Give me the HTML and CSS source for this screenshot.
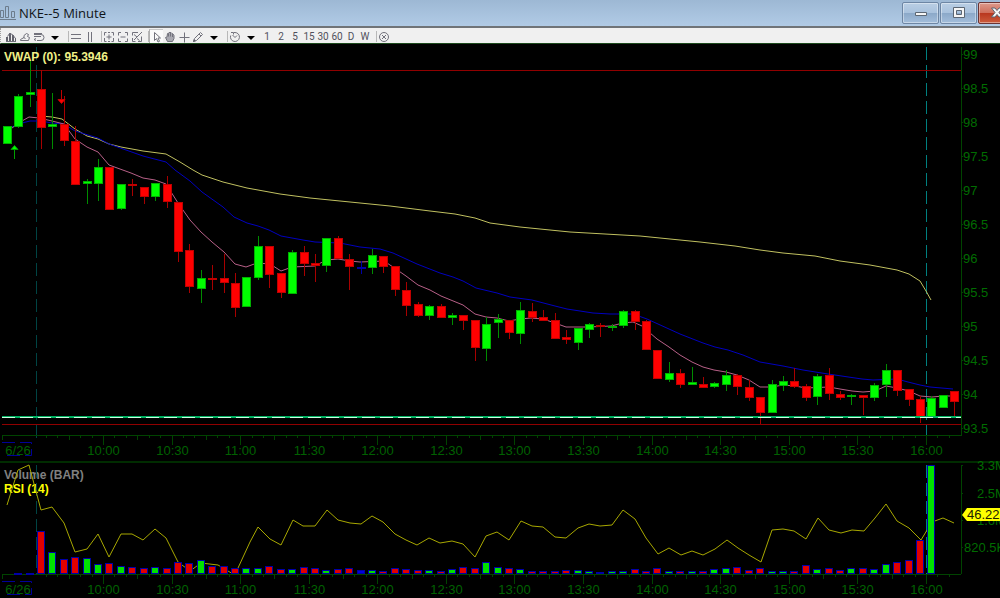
FILE: index.html
```html
<!DOCTYPE html>
<html lang="en">
<head>
  <meta charset="UTF-8">
  <meta name="viewport" content="width=device-width, initial-scale=1.0">
  <title>NKE--5 Minute</title>
  <link rel="stylesheet" href="styles.css">
</head>
<body>
  <header class="titlebar">
    <svg class="app-icon" viewBox="0 0 16 16" aria-hidden="true">
      <path d="M0.5 12.5V5.5h3v7zM5.5 12.5V1.5h3v11zM11.5 12.5V6.5h3v6zM0 14.5h16"/>
    </svg>
    <h1>NKE--5 Minute</h1>
    <div class="window-buttons">
      <button type="button" aria-label="Minimize">
        <svg viewBox="0 0 14 14"><path class="glyph" d="M1.5 6.5h11v3h-11z"/></svg>
      </button>
      <button type="button" aria-label="Maximize">
        <svg viewBox="0 0 14 14"><path class="glyph" fill-rule="evenodd" d="M1.5 1.5h11v10h-11zM4.5 4.5v4h5v-4z"/></svg>
      </button>
      <button type="button" class="close" aria-label="Close">
        <svg viewBox="0 0 14 14"><path class="glyph" d="M1.5 2h3.5l2 2.500 2-2.500h3.500l-3.500 4.500 3.500 4.500h-3.500l-2-2.500-2 2.500h-3.500l3.500-4.500z"/></svg>
      </button>
    </div>
  </header>

  <nav class="toolbar" aria-label="Chart tools">
    <button type="button" aria-label="Chart style"><svg viewBox="0 0 12 12"><path class="solid" d="M1 6h2v4H1zM4 2h2v8H4zM7 4h2v6H7zM10 7h1v3h-1z"/><path d="M1 10.500h10M2.500 5.500l2-3 3 1 3 4"/></svg></button>
    <button type="button" aria-label="Studies"><svg viewBox="0 0 12 12"><path d="M1.500 9.500h8l1-3-2-1 1-2-2-1-2.500 2v2l-3.500 2zM4.500 6.500l2 1"/></svg></button>
    <button type="button" aria-label="Templates"><svg viewBox="0 0 12 12"><path d="M1 2.500h8M1 5.500h7M4 9.500h4M1 3.500h7q3 0 3 3t-3 3M3 7.500l-2 1 2 1"/></svg></button>
    <button type="button" class="drop" aria-label="More templates"><svg viewBox="0 0 12 12"><path class="arrow" d="M2 5h8l-4 4z"/></svg></button>
    <span class="sep"></span>
    <button type="button" aria-label="Horizontal line"><svg viewBox="0 0 12 12"><path d="M1 3.500h10M1 7.500h10"/></svg></button>
    <button type="button" aria-label="Vertical line"><svg viewBox="0 0 12 12"><path d="M4.500 1v10M7.500 1v10"/></svg></button>
    <span class="sep"></span>
    <button type="button" aria-label="Zoom in"><svg viewBox="0 0 12 12"><path d="M3.500 1.500h-2v3M1.500 7v3.500h2M8.500 1.500h2v3M10.500 7v3.500h-2M5 1.500h2M5 10.500h2M3.500 6h5M6 3.500v5"/></svg></button>
    <button type="button" aria-label="Zoom out"><svg viewBox="0 0 12 12"><path d="M4 1.500h-2.500v3M8 1.500h2.500v3M4 10.500h-2.500v-3M8 10.500h2.500v-3M3.500 6h5"/></svg></button>
    <button type="button" aria-label="Reset zoom"><svg viewBox="0 0 12 12"><path d="M7 1.500h-5.500v3M1.500 7v3.500h3M7 10.500h3.500v-5M11 1l-8 8M3 3.500l3 2.500M6 7.500l2.500 2"/></svg></button>
    <span class="sep"></span>
    <button type="button" class="active" aria-label="Pointer"><svg viewBox="0 0 12 12"><path d="M3.500 1.500v8l2-2 1.500 3.500 1.500-.7-1.500-3.300h2.500z"/></svg></button>
    <button type="button" aria-label="Pan"><svg viewBox="0 0 12 12"><path class="palm" d="M3.500 10.500l-2-4 1.500-.5.500-3.500 1 0 .5-1h2l1 1 1 .5 1 1.500v3l-1.500 3z"/><path d="M4.500 2.500v3M6.500 2v3.500M8.500 3v3"/></svg></button>
    <button type="button" aria-label="Crosshair"><svg viewBox="0 0 12 12"><path d="M1.500 6.500h10M6.500 1.500v10"/></svg></button>
    <button type="button" aria-label="Draw"><svg viewBox="0 0 12 12"><path d="M1.500 10.500l1-3 6-6 2 2-6 6zM7 3l2 2"/><path class="solid" d="M1 11l1-3 2 2z"/></svg></button>
    <button type="button" class="drop" aria-label="More drawing tools"><svg viewBox="0 0 12 12"><path class="arrow" d="M2 5h8l-4 4z"/></svg></button>
    <span class="sep"></span>
    <button type="button" aria-label="Interval"><svg viewBox="0 0 12 12"><path d="M5 1.500h1a4.500 4.500 0 1 1-4.300 3M2 1.500h2.500v2M6 6.500l-2.500-2.500M6 6.500l2-2"/></svg></button>
    <button type="button" class="drop" aria-label="More intervals"><svg viewBox="0 0 12 12"><path class="arrow" d="M2 5h8l-4 4z"/></svg></button>
    <button type="button">1</button>
    <button type="button">2</button>
    <button type="button">5</button>
    <button type="button">15</button>
    <button type="button">30</button>
    <button type="button">60</button>
    <button type="button">D</button>
    <button type="button">W</button>
    <span class="sep"></span>
    <button type="button" aria-label="Close chart"><svg viewBox="0 0 12 12"><circle cx="6" cy="6" r="4.500"/><path d="M4 4l4 4M8 4l-4 4"/></svg></button>
  </nav>

  <main class="charts">
    <svg id="price" class="chart" viewBox="0 44 1000 417" role="img" aria-label="NKE price"></svg>
    <svg id="volume" class="chart" viewBox="0 463 1000 135" role="img" aria-label="NKE volume and RSI"></svg>
  </main>

  <script src="chart.js"></script>
</body>
</html>
```

FILE: styles.css
```css
* {
  margin: 0;
  padding: 0;
  box-sizing: border-box;
}

body {
  font-family: "Open Sans", "Noto Sans", sans-serif;
  background: #000;
  min-height: 100vh;
  overflow: hidden;
}

/* title bar */
.titlebar {
  display: flex;
  align-items: center;
  height: 28px;
  background: linear-gradient(#9db8d4, #b1cbe6);
  border-bottom: 2px solid #707478;
  overflow: hidden;
}

.app-icon {
  width: 16px;
  height: 16px;
  flex: none;
  fill: none;
  stroke: #6d7c8c;
}

.titlebar h1 {
  flex: 1;
  padding-left: 3px;
  font-size: 13px;
  line-height: 18px;
  font-weight: 400;
  color: #101418;
}

.window-buttons {
  display: flex;
  gap: 1px;
  margin-right: -16px;
}

.window-buttons button {
  display: flex;
  align-items: center;
  justify-content: center;
  width: 37px;
  height: 22px;
  border: 1px solid #6d86a4;
  border-radius: 2px;
  background: linear-gradient(#b9cee4 0%, #a9c2dd 48%, #8ba8c8 50%, #a3bedb 100%);
  box-shadow: inset 0 0 0 1px rgba(255, 255, 255, 0.4);
}

.window-buttons .close {
  width: 38px;
  border-color: #6a3434;
  background: linear-gradient(#dd9a8c 0%, #cf6f5c 48%, #b8361e 50%, #cc5c3c 100%);
}

.window-buttons svg {
  width: 14px;
  height: 14px;
}

.glyph {
  fill: #f6f6f6;
  stroke: #5c6672;
}

/* toolbar */
.toolbar {
  display: flex;
  align-items: center;
  height: 16px;
  padding: 1px 0 0 3px;
  background: #f0f0f0;
  border-left: 1px dotted #a0a0a0;
  border-bottom: 1px solid #1c4a1c;
}

.toolbar button {
  display: flex;
  align-items: center;
  justify-content: center;
  width: 14px;
  height: 14px;
  padding-top: 1px;
  border: none;
  background: none;
  font-family: "Liberation Sans Narrow", "Roboto", sans-serif;
  font-size: 10px;
  line-height: 12px;
  color: #50505c;
}

.toolbar .drop {
  width: 18px;
}

.toolbar .active {
  padding: 0;
  background: #fafafa;
  border-left: 1px solid #b0b0b0;
  border-top: 1px solid #c8c8c8;
}

.toolbar svg {
  width: 12px;
  height: 12px;
  flex: none;
  fill: none;
  stroke: #72727c;
}

.toolbar .solid {
  fill: #62626c;
  stroke: none;
}

.toolbar .palm {
  fill: #a8a8b0;
}

.toolbar .arrow {
  fill: #000;
  stroke: none;
}

.sep {
  width: 5px;
  height: 11px;
  border-right: 1px solid #b8b8b8;
}

/* charts */
.chart {
  display: block;
  width: 100%;
  height: auto;
  font-family: "Liberation Sans", Arial, sans-serif;
  font-size: 13px;
  fill: none;
  overflow: visible;
}

.chart + .chart {
  border-top: 2px solid #002c00;
}

.chart line,
.chart rect,
.axis {
  shape-rendering: crispEdges;
}

.axis {
  stroke: #004400;
}

.axis-label {
  fill: #006c00;
}

.time-label {
  fill: #006000;
  text-anchor: middle;
}

.title {
  font-size: 12px;
  font-weight: 700;
}

.title.vwap-title { fill: #f0f088; }
.title.volume-title { fill: #808080; }
.title.rsi-title { fill: #ffff00; }

.date-box {
  stroke: #000098;
  stroke-dasharray: 13 5;
}

.session-start { stroke: #004444; stroke-dasharray: 13 5; }
.session-end { stroke: #008080; stroke-dasharray: 13 5; }

.range { stroke: #900000; }
.last-price { stroke: #00b060; stroke-width: 2; }
.last-price-dash { stroke: #c8ffe0; stroke-dasharray: 13 5; }

.vwap { stroke: #c0c060; }
.ema-slow { stroke: #0000c0; }
.ema-fast { stroke: #b86088; }
.rsi { stroke: #a8a800; }

.up .body { fill: #00ff00; stroke: #00b000; }
.up .wick { stroke: #008c00; }
.down .body { fill: #ff0000; stroke: #c00000; }
.down .wick { stroke: #a80000; }
.flat .body,
.flat .wick { stroke: #0000a8; }

.bar { stroke: #0000a8; }
.bar.up { fill: #00e000; }
.bar.down { fill: #e00000; }
.bar.flat { fill: #0000e0; }

.signal-up { fill: #00ff00; stroke: #00a000; }
.signal-down { fill: #ff0000; stroke: #c00000; }

.tag { fill: #ffff00; }
.tag-text { fill: #202000; }
```

FILE: chart.js
```js
const SVG_NS = "http://www.w3.org/2000/svg";
const FIRST_X = 7;
const STEP = 11.416;
const AXIS_X = 961;

// direction, high, body top, body bottom, low
const candles = [
  ["up", 126, 126, 144, 144], ["up", 94, 96, 127, 128], ["up", 61, 92, 95, 107],
  ["down", 70, 89, 128, 149], ["up", 93, 124, 127, 149], ["down", 96, 124, 141, 146],
  ["down", 126, 141, 185, 185], ["up", 179, 181, 184, 204], ["up", 159, 167, 184, 201],
  ["down", 167, 167, 210, 210], ["up", 184, 184, 209, 210], ["down", 179, 184, 185, 196],
  ["down", 187, 187, 197, 204], ["up", 183, 183, 197, 201], ["down", 176, 184, 202, 208],
  ["down", 202, 202, 252, 262], ["down", 244, 250, 287, 293], ["up", 270, 278, 289, 303],
  ["down", 265, 278, 280, 290], ["down", 254, 278, 283, 293], ["down", 273, 283, 308, 317],
  ["up", 277, 277, 307, 307], ["up", 236, 246, 278, 280], ["down", 246, 246, 275, 288],
  ["down", 273, 273, 293, 298], ["up", 250, 252, 294, 294], ["down", 246, 252, 264, 276],
  ["down", 254, 263, 266, 282], ["up", 238, 238, 266, 272], ["down", 236, 238, 259, 259],
  ["down", 254, 259, 267, 290], ["flat", 261, 267, 268, 274], ["up", 249, 255, 268, 274],
  ["down", 256, 256, 267, 273], ["down", 266, 266, 290, 296], ["down", 282, 290, 306, 316],
  ["down", 302, 304, 316, 317], ["up", 305, 306, 316, 320], ["down", 304, 306, 318, 318],
  ["up", 313, 315, 318, 325], ["down", 315, 315, 321, 330], ["down", 320, 320, 348, 361],
  ["up", 317, 324, 349, 361], ["up", 314, 319, 323, 338], ["down", 320, 320, 333, 339],
  ["up", 302, 310, 334, 344], ["down", 303, 311, 318, 322], ["down", 310, 317, 321, 321],
  ["down", 313, 320, 339, 339], ["down", 330, 337, 340, 344], ["up", 328, 328, 343, 350],
  ["up", 323, 324, 330, 338], ["down", 323, 325, 327, 337], ["up", 324, 326, 328, 331],
  ["up", 310, 311, 326, 328], ["down", 310, 311, 322, 330], ["down", 320, 321, 350, 350],
  ["down", 350, 350, 379, 379], ["up", 362, 373, 380, 382], ["down", 369, 373, 385, 388],
  ["up", 367, 382, 385, 385], ["down", 377, 384, 388, 388], ["up", 382, 383, 387, 388],
  ["up", 370, 375, 385, 391], ["down", 374, 375, 387, 395], ["down", 380, 387, 398, 401],
  ["down", 397, 397, 413, 424], ["up", 380, 384, 413, 413], ["up", 376, 381, 386, 391],
  ["down", 368, 381, 387, 388], ["down", 384, 386, 398, 401], ["up", 374, 376, 397, 405],
  ["down", 368, 375, 394, 400], ["down", 391, 394, 398, 400], ["up", 394, 395, 397, 405],
  ["down", 395, 395, 398, 415], ["up", 383, 385, 398, 401], ["up", 364, 370, 385, 397],
  ["down", 370, 370, 391, 396], ["down", 389, 389, 400, 406], ["down", 396, 399, 417, 423],
  ["up", 396, 398, 417, 417], ["up", 395, 395, 408, 408], ["down", 391, 391, 402, 417]
];

// bar heights, same order as the candles
const volumes = [
  0, 1, 1, 43, 22, 15, 17, 16, 10, 11, 8, 7, 6, 7, 6, 12, 11, 14, 8, 8, 6,
  6, 6, 8, 5, 5, 7, 6, 4, 5, 6, 4, 4, 3, 6, 5, 4, 4, 3, 5, 7, 6,
  12, 7, 6, 5, 3, 3, 3, 4, 4, 3, 2, 3, 3, 5, 3, 6, 3, 3, 3, 3, 5,
  6, 7, 4, 6, 3, 3, 3, 9, 5, 6, 4, 6, 6, 5, 10, 12, 14, 34, 109, 0, 0
];

const vwap = "41,116 52,117 62,119 75,129 87,136 98,139 109,144 121,147 143,151 166,154 180,162 193,170 202,175 223,182 247,188 280,194 310,198 360,203 390,206 430,211 455,214 475,218 490,223 520,227 570,232 640,236 700,242 735,246 760,250 783,253 815,256 840,261 870,265 897,270 909,274 920,281 926,291 931,300";
const emaSlow = "12,127 22,123 30,121 41,121 52,123 64,124 75,131 98,138 109,144 143,156 166,162 175,170 190,181 202,192 223,207 234,217 247,223 258,226 269,230 281,236 303,240 315,242 340,243 360,247 380,249 393,253 417,264 440,273 453,277 463,281 476,288 497,293 510,297 532,300 555,306 567,309 593,313 610,314 633,314 647,319 658,324 680,334 703,343 715,347 728,350 743,355 760,362 783,366 803,370 828,374 862,379 873,380 897,379 908,382 920,385 930,387 953,389";
const emaFast = "12,128 22,121 29,117 39,118 52,121 64,124 75,139 87,147 98,152 109,165 131,173 143,178 155,180 166,184 178,203 190,220 201,232 212,242 224,252 235,264 246,267 257,263 270,264 281,271 292,267 315,266 326,260 338,259 350,261 360,262 384,261 393,267 406,276 418,285 430,290 441,296 463,305 475,314 486,317 497,318 509,321 520,319 531,318 543,319 555,323 566,327 588,327 611,326 623,323 633,322 642,326 657,339 669,347 680,355 692,362 703,367 714,370 726,372 737,375 749,380 760,387 772,387 783,385 795,386 806,388 829,387 840,389 852,391 863,392 875,391 886,386 897,388 909,391 920,396 932,397 943,396 955,396";
const rsi = "7,505 18,470 29,465 41,510 52,507 64,523 75,552 87,549 98,534 109,557 121,534 132,534 143,540 155,529 166,538 178,562 190,571 201,563 218,565 233,574 238,568 250,542 258,527 270,539 281,545 293,520 303,526 315,526 327,510 338,520 350,523 361,524 372,516 383,522 395,534 406,540 417,545 429,538 440,543 452,541 463,544 475,557 486,536 497,532 509,540 521,521 532,526 543,527 555,537 566,538 578,528 589,524 600,526 612,525 623,510 635,519 646,538 658,554 669,548 681,555 692,551 703,555 715,549 727,540 738,548 749,555 761,562 772,530 783,529 794,531 806,539 818,518 829,530 841,533 852,530 864,531 875,518 886,504 897,521 909,528 921,540 932,522 943,518 954,523";

function add(parent, tag, className, attrs, text) {
  const el = document.createElementNS(SVG_NS, tag);
  el.setAttribute("class", className);
  for (const key in attrs) el.setAttribute(key, attrs[key]);
  if (text) el.textContent = text;
  parent.appendChild(el);
  return el;
}

function line(parent, className, x1, y1, x2, y2) {
  return add(parent, "line", className, { x1, y1, x2, y2 });
}

function candleX(i) {
  return Math.round(FIRST_X + i * STEP - 0.3);
}

// time axis: one tick per 5 minutes, longer at :15 and :30, label on each half hour
function drawTimeAxis(svg, y) {
  line(svg, "axis", 2, y + 0.5, AXIS_X, y + 0.5);
  line(svg, "axis", 2.5, y, 2.5, y + 5);
  for (let i = -5; i <= 74; i++) {
    const x = Math.round(103 + i * 11.43) + 0.5;
    const length = i % 6 === 0 ? 10 : i % 3 === 0 ? 5 : 3;
    line(svg, "axis", x, y, x, y + length);
    if (i >= 0 && i % 6 === 0) {
      const minutes = 600 + i * 5;
      const label = Math.floor(minutes / 60) + ":" + String(minutes % 60).padStart(2, "0");
      add(svg, "text", "time-label", { x: x, y: y + 20 }, label);
    }
  }
  add(svg, "path", "date-box", { d: `M2 ${y + 7.5}H31.5V${y + 20.5}H2` });
  add(svg, "text", "time-label", { x: 18, y: y + 20 }, "6/26");
}

function drawPrice() {
  const svg = document.getElementById("price");
  line(svg, "session-start", 36, 47, 36, 443);
  line(svg, "session-end", 926.5, 47, 926.5, 435);
  line(svg, "range", 2, 70.5, AXIS_X, 70.5);
  line(svg, "range", 2, 424.5, AXIS_X, 424.5);

  add(svg, "polyline", "vwap", { points: vwap });
  add(svg, "polyline", "ema-slow", { points: emaSlow });
  add(svg, "polyline", "ema-fast", { points: emaFast });

  candles.forEach(([dir, high, top, bottom, low], i) => {
    const x = candleX(i);
    const g = add(svg, "g", dir, {});
    line(g, "wick", x + 0.5, high, x + 0.5, low);
    add(g, "rect", "body", { x: x - 3.5, y: top + 0.5, width: 8, height: Math.max(bottom - top - 1, 0.5) });
  });

  line(svg, "last-price", 2, 417, AXIS_X, 417);
  line(svg, "last-price-dash", 2, 417.5, AXIS_X, 417.5);

  add(svg, "path", "signal-up", { d: "M14.5 159V150M11 149.500h7l-3.500-4z" });
  add(svg, "path", "signal-down", { d: "M61.5 90V99M58 99.500h7l-3.500 4z" });

  line(svg, "axis", AXIS_X + 0.5, 47, AXIS_X + 0.5, 436);
  for (let i = 0; i <= 11; i++) {
    const y = Math.round(54 + i * 34);
    line(svg, "axis", AXIS_X, y + 0.5, AXIS_X + 2, y + 0.5);
    add(svg, "text", "axis-label", { x: 963, y: y + 5 }, String(99 - i * 0.5));
  }
  drawTimeAxis(svg, 435);
  add(svg, "text", "title vwap-title", { x: 4, y: 61 }, "VWAP (0): 95.3946");
}

function drawVolume() {
  const svg = document.getElementById("volume");
  const base = 574;
  add(svg, "text", "title volume-title", { x: 4, y: 479 }, "Volume (BAR)");
  add(svg, "text", "title rsi-title", { x: 4, y: 493 }, "RSI (14)");
  line(svg, "session-start", 36, 465, 36, base);
  line(svg, "session-end", 926.5, 465, 926.5, base);
  add(svg, "polyline", "rsi", { points: rsi });
  drawTimeAxis(svg, base);

  volumes.forEach((height, i) => {
    if (!height) return;
    const dir = height === 1 ? "flat" : candles[i][0];
    add(svg, "rect", "bar " + dir, { x: candleX(i) - 3.5, y: base - height + 0.5, width: 7, height: height - 1 || 0.5 });
  });

  line(svg, "axis", AXIS_X + 0.5, 465, AXIS_X + 0.5, base);
  [["3.3M", 977, 465], ["2.5M", 977, 493], ["1.6M", 977, 520], ["820.5K", 964, 547]].forEach(([label, x, y]) => {
    line(svg, "axis", AXIS_X, y + 0.5, AXIS_X + 2, y + 0.5);
    add(svg, "text", "axis-label", { x: x, y: y + 5 }, label);
  });
  add(svg, "path", "tag", { d: "M962 515l5-7h33v13h-33z" });
  add(svg, "text", "tag-text", { x: 967, y: 519 }, "46.22");
}

drawPrice();
drawVolume();
```
